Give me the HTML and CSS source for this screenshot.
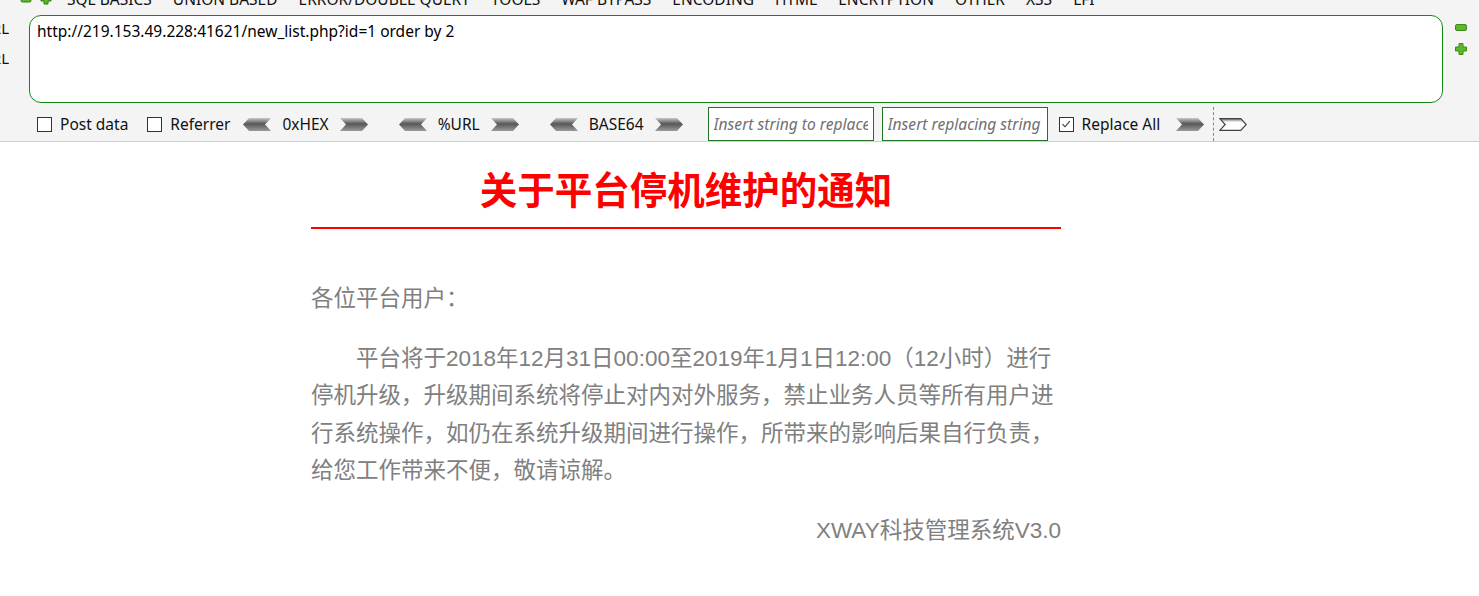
FILE: index.html
```html
<!DOCTYPE html>
<html lang="zh-CN">
<head>
    <meta charset="UTF-8">
    <meta name="viewport" content="width=device-width, initial-scale=1.0">
    <title>关于平台停机维护的通知</title>
    <link rel="stylesheet" href="styles.css">
</head>
<body>
    <div class="hackbar">
        <div class="menu">
            <span class="menu-icon">
                <svg width="12" height="12" viewBox="0 0 12 12"><rect x="1" y="4" width="10" height="5" rx="1.5" fill="#5cb82a" stroke="#2f7a12"/></svg>
            </span>
            <span class="menu-icon">
                <svg width="12" height="12" viewBox="0 0 12 12"><path d="M4 1h4v3h3v4H8v3H4V8H1V4h3z" fill="#5cb82a" stroke="#2f7a12"/></svg>
            </span>
            <span class="menu-item">SQL BASICS</span>
            <span class="menu-item">UNION BASED</span>
            <span class="menu-item">ERROR/DOUBLE QUERY</span>
            <span class="menu-item">TOOLS</span>
            <span class="menu-item">WAF BYPASS</span>
            <span class="menu-item">ENCODING</span>
            <span class="menu-item">HTML</span>
            <span class="menu-item">ENCRYPTION</span>
            <span class="menu-item">OTHER</span>
            <span class="menu-item">XSS</span>
            <span class="menu-item">LFI</span>
        </div>

        <div class="url-row">
            <div class="side-labels">
                <span>Load URL</span>
                <span>Split URL</span>
            </div>
            <textarea class="url-box" spellcheck="false">http://219.153.49.228:41621/new_list.php?id=1 order by 2</textarea>
            <div class="zoom-btns">
                <svg width="12" height="7" viewBox="0 0 12 7"><rect x="0.5" y="0.5" width="11" height="6" rx="1.5" fill="#5cb82a" stroke="#3c8a18"/></svg>
                <svg width="12" height="12" viewBox="0 0 12 12"><path d="M4 0.5h4v3.5h3.5v4H8v3.5H4V8H0.5V4H4z" fill="#5cb82a" stroke="#3c8a18"/></svg>
            </div>
        </div>

        <div class="options">
            <label class="check check-post"><span class="box"></span>Post data</label>
            <label class="check check-ref"><span class="box"></span>Referrer</label>

            <div class="codec">
                <svg class="arrow" width="28" height="13" viewBox="0 0 28 13"><polygon points="0,6.5 6,0 28,0 22,6.5 28,13 6,13" fill="url(#shade)"/></svg>
                <span>0xHEX</span>
                <svg class="arrow" width="28" height="13" viewBox="0 0 28 13"><polygon points="0,0 22,0 28,6.5 22,13 0,13 6,6.5" fill="url(#shade)"/></svg>
            </div>
            <div class="codec">
                <svg class="arrow" width="28" height="13" viewBox="0 0 28 13"><polygon points="0,6.5 6,0 28,0 22,6.5 28,13 6,13" fill="url(#shade)"/></svg>
                <span>%URL</span>
                <svg class="arrow" width="28" height="13" viewBox="0 0 28 13"><polygon points="0,0 22,0 28,6.5 22,13 0,13 6,6.5" fill="url(#shade)"/></svg>
            </div>
            <div class="codec codec-last">
                <svg class="arrow" width="28" height="13" viewBox="0 0 28 13"><polygon points="0,6.5 6,0 28,0 22,6.5 28,13 6,13" fill="url(#shade)"/></svg>
                <span>BASE64</span>
                <svg class="arrow" width="28" height="13" viewBox="0 0 28 13"><polygon points="0,0 22,0 28,6.5 22,13 0,13 6,6.5" fill="url(#shade)"/></svg>
            </div>

            <input class="replace-input" type="text" placeholder="Insert string to replace">
            <input class="replace-input" type="text" placeholder="Insert replacing string">

            <label class="check check-all">
                <span class="box">
                    <svg width="12" height="12" viewBox="0 0 12 12"><path d="M2.5 6.2l2.5 2.6 4.8-5.6" fill="none" stroke="#333" stroke-width="1.1"/></svg>
                </span>Replace All
            </label>

            <svg class="arrow" width="28" height="13" viewBox="0 0 28 13"><polygon points="0,0 22,0 28,6.5 22,13 0,13 6,6.5" fill="url(#shade)"/></svg>
            <span class="separator"></span>
            <svg class="arrow" width="28" height="13" viewBox="0 0 28 13"><polygon points="0.8,0.6 21.8,0.6 27.2,6.5 21.8,12.4 0.8,12.4 6.2,6.5" fill="url(#pale)" stroke="#444" stroke-width="1.2"/></svg>

            <svg width="0" height="0" class="defs">
                <defs>
                    <linearGradient id="shade" x1="0" y1="0" x2="0" y2="1">
                        <stop offset="0" stop-color="#c8c8c8"/>
                        <stop offset="0.45" stop-color="#575757"/>
                        <stop offset="1" stop-color="#9a9a9a"/>
                    </linearGradient>
                    <linearGradient id="pale" x1="0" y1="0" x2="0" y2="1">
                        <stop offset="0" stop-color="#666"/>
                        <stop offset="0.3" stop-color="#fff"/>
                        <stop offset="1" stop-color="#fff"/>
                    </linearGradient>
                </defs>
            </svg>
        </div>
    </div>

    <main class="notice">
        <h1 class="notice-title">关于平台停机维护的通知</h1>
        <p class="greeting">各位平台用户：</p>
        <p class="notice-body">平台将于2018年12月31日00:00至2019年1月1日12:00（12小时）进行停机升级，升级期间系统将停止对内对外服务，禁止业务人员等所有用户进行系统操作，如仍在系统升级期间进行操作，所带来的影响后果自行负责，给您工作带来不便，敬请谅解。</p>
        <p class="signature">XWAY科技管理系统V3.0</p>
    </main>
</body>
</html>
```

FILE: styles.css
```css
body {
    margin: 0;
    padding: 0;
    background-color: #fff;
    font-family: "Liberation Sans", "Noto Sans CJK SC", sans-serif;
}

/* hackbar toolbar */
.hackbar {
    background-color: #f4f4f4;
    border-bottom: 1px solid #d0d0d0;
    font-family: "Noto Sans", "Liberation Sans", sans-serif;
    font-size: 15.5px;
    color: #111;
    overflow: hidden;
}

.menu {
    display: flex;
    align-items: center;
    height: 20px;
    margin-top: -11px;
    padding-left: 20px;
    white-space: nowrap;
}

.menu-icon {
    display: flex;
    margin-right: 8px;
}

.menu-icon + .menu-item {
    margin-left: 7px;
}

.menu-item {
    margin-right: 21px;
    position: relative;
}

.menu-item::after {
    content: "";
    position: absolute;
    right: -5px;
    top: 9px;
    border-left: 2px solid transparent;
    border-right: 2px solid transparent;
    border-top: 2px solid #aaa;
}

.url-row {
    display: flex;
    margin-top: 6px;
}

.side-labels {
    display: flex;
    flex-direction: column;
    width: 9px;
    margin-right: 20px;
    margin-top: -2px;
    overflow: hidden;
    font-size: 15px;
    line-height: 30px;
}

.side-labels span {
    display: flex;
    justify-content: flex-end;
    white-space: nowrap;
}

.url-box {
    flex: 1;
    height: 88px;
    box-sizing: border-box;
    margin: 0;
    padding: 4px 7px;
    border: 1px solid #128a12;
    border-radius: 12px;
    background-color: #fff;
    font-family: "Noto Sans", "Liberation Sans", sans-serif;
    font-size: 15.5px;
    color: #000;
    resize: none;
    outline: none;
}

.zoom-btns {
    width: 36px;
    display: flex;
    flex-direction: column;
    align-items: center;
    gap: 12px;
    padding-top: 9px;
}

.options {
    display: flex;
    align-items: center;
    height: 38px;
    padding-left: 37px;
    padding-top: 4px;
    box-sizing: border-box;
    white-space: nowrap;
}

.check {
    display: flex;
    align-items: center;
    gap: 8px;
}

.check-post {
    margin-right: 19px;
}

.check-ref {
    margin-right: 13px;
}

.check-all {
    margin-right: 16px;
}

.box {
    width: 13px;
    height: 13px;
    border: 1px solid #333;
    background-color: #fff;
    display: flex;
    align-items: center;
    justify-content: center;
}

.codec {
    display: flex;
    align-items: center;
    gap: 11px;
    margin-right: 31px;
}

.codec-last {
    margin-right: 25px;
}

.arrow {
    display: block;
}

.replace-input {
    width: 166px;
    height: 34px;
    box-sizing: border-box;
    margin: 0 8px 0 0;
    padding: 0 5px;
    border: 1px solid #207520;
    background-color: #fff;
    font-family: "Noto Sans", "Liberation Sans", sans-serif;
    font-size: 15.6px;
    outline: none;
}

.replace-input + .replace-input {
    margin-right: 11px;
}

.replace-input::placeholder {
    color: #707070;
    font-style: italic;
}

.separator {
    height: 34px;
    border-left: 1px dashed #888;
    margin: 0 5px 0 9px;
}

.defs {
    position: absolute;
}

/* notice page */
.notice {
    width: 750px;
    margin-left: 311px;
    padding-top: 25px;
    font-size: 22.5px;
    line-height: 37.6px;
    color: #808080;
}

.notice-title {
    margin: 0;
    padding-bottom: 12px;
    border-bottom: 2px solid #ff0000;
    color: #ff0000;
    font-size: 37.5px;
    line-height: 48px;
    font-weight: bold;
    text-align: center;
}

.notice p {
    margin: 0 0 22px;
}

.greeting {
    padding-top: 51px;
}

.notice-body {
    text-indent: 2em;
}

.signature {
    text-align: right;
}
```
